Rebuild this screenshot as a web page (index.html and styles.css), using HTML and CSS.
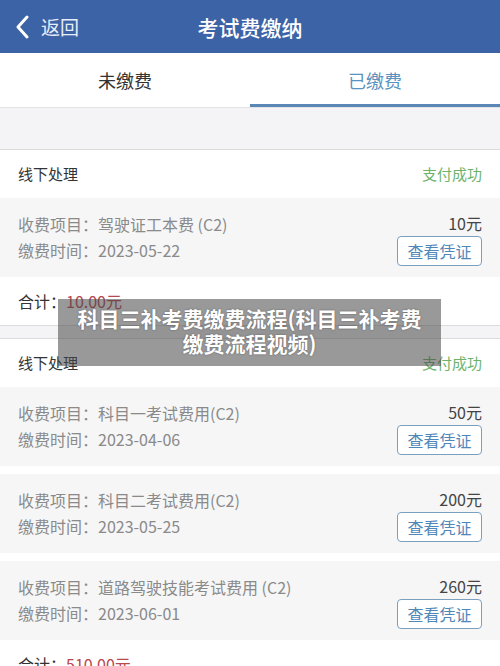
FILE: index.html
```html
<!DOCTYPE html>
<html lang="zh-CN">
<head>
    <meta charset="UTF-8">
    <meta name="viewport" content="width=device-width, initial-scale=1.0">
    <title>考试费缴纳</title>
    <link rel="stylesheet" href="styles.css">
</head>
<body>

<div class="topbar">
    <div class="back">
        <svg width="14" height="24" viewBox="0 0 14 24"><polyline points="11,2 2,12 11,22" fill="none" stroke="#fff" stroke-width="3" stroke-linecap="round" stroke-linejoin="round"/></svg>
        <span>返回</span>
    </div>
    <div class="title">考试费缴纳</div>
    <div></div>
</div>

<div class="tabs">
    <div class="tab">未缴费</div>
    <div class="tab active">已缴费</div>
</div>

<div class="band"></div>

<div class="card">
    <div class="card-head">
        <span>线下处理</span>
        <span class="ok">支付成功</span>
    </div>
    <div class="item">
        <div class="info">
            <div>收费项目：驾驶证工本费 (C2)</div>
            <div>缴费时间：2023-05-22</div>
        </div>
        <div class="side">
            <div class="amount">10元</div>
            <button class="view">查看凭证</button>
        </div>
    </div>
    <div class="total">合计：<span class="money">10.00元</span></div>
</div>

<div class="band small"></div>

<div class="card">
    <div class="card-head">
        <span>线下处理</span>
        <span class="ok">支付成功</span>
    </div>
    <div class="item">
        <div class="info">
            <div>收费项目：科目一考试费用(C2)</div>
            <div>缴费时间：2023-04-06</div>
        </div>
        <div class="side">
            <div class="amount">50元</div>
            <button class="view">查看凭证</button>
        </div>
    </div>
    <div class="item">
        <div class="info">
            <div>收费项目：科目二考试费用(C2)</div>
            <div>缴费时间：2023-05-25</div>
        </div>
        <div class="side">
            <div class="amount">200元</div>
            <button class="view">查看凭证</button>
        </div>
    </div>
    <div class="item">
        <div class="info">
            <div>收费项目：道路驾驶技能考试费用 (C2)</div>
            <div>缴费时间：2023-06-01</div>
        </div>
        <div class="side">
            <div class="amount">260元</div>
            <button class="view">查看凭证</button>
        </div>
    </div>
    <div class="total">合计：<span class="money">510.00元</span></div>
</div>

<div class="caption">科目三补考费缴费流程(科目三补考费<br>缴费流程视频)</div>

</body>
</html>
```

FILE: styles.css
```css
body {
    margin: 0;
    font-family: "Noto Sans CJK SC", "Noto Sans", sans-serif;
    background-color: #fff;
    color: #333;
    position: relative;
    overflow: hidden;
}
.topbar {
    height: 53px;
    background-color: #3d63a7;
    display: grid;
    grid-template-columns: 1fr auto 1fr;
    align-items: center;
    color: #fff;
}
.back {
    display: flex;
    align-items: center;
    gap: 11px;
    padding-left: 16px;
    font-size: 19px;
    color: #e8edf6;
}
.title {
    font-size: 21px;
    font-weight: 500;
}
.tabs {
    display: flex;
    height: 54px;
    border-bottom: 1px solid #e3e3e6;
}
.tab {
    flex: 1;
    display: flex;
    align-items: center;
    justify-content: center;
    font-size: 18px;
    color: #333;
}
.tab.active {
    color: #5a93c0;
    border-bottom: 3px solid #5b87b7;
    padding-top: 3px;
}
.band {
    height: 41px;
    background-color: #f4f4f6;
    border-bottom: 1px solid #dcdcdf;
}
.band.small {
    height: 12px;
    border-top: 1px solid #dcdcdf;
}
.card-head {
    height: 47px;
    display: flex;
    align-items: center;
    justify-content: space-between;
    padding: 0 18px;
    font-size: 15px;
}
.ok {
    color: #6db36c;
}
.item {
    box-sizing: border-box;
    height: 79px;
    margin-top: 8px;
    padding: 13px 18px 0;
    background-color: #f6f6f7;
    display: flex;
    justify-content: space-between;
    align-items: flex-start;
}
.card-head + .item {
    margin-top: 1px;
}
.info {
    font-size: 16px;
    line-height: 26px;
    color: #8a8a8a;
}
.side {
    display: flex;
    flex-direction: column;
    align-items: flex-end;
}
.amount {
    font-size: 16px;
    line-height: 24px;
    color: #444;
}
.view {
    width: 85px;
    height: 30px;
    margin-top: 1px;
    padding: 0;
    border: 1.5px solid #7ba0bf;
    border-radius: 4px;
    background-color: #fff;
    color: #4f87b8;
    font-family: inherit;
    font-size: 16px;
}
.total {
    height: 48px;
    display: flex;
    align-items: center;
    padding: 0 18px;
    font-size: 16px;
}
.money {
    color: #b8484f;
}
.caption {
    position: absolute;
    left: 58px;
    top: 299px;
    width: 383px;
    height: 67px;
    box-sizing: border-box;
    padding-top: 7px;
    background-color: rgba(70, 70, 70, 0.55);
    color: #fff;
    font-size: 21px;
    font-weight: bold;
    line-height: 25px;
    text-align: center;
    text-shadow: 0 0 2px rgba(0, 0, 0, 0.4);
}
```
